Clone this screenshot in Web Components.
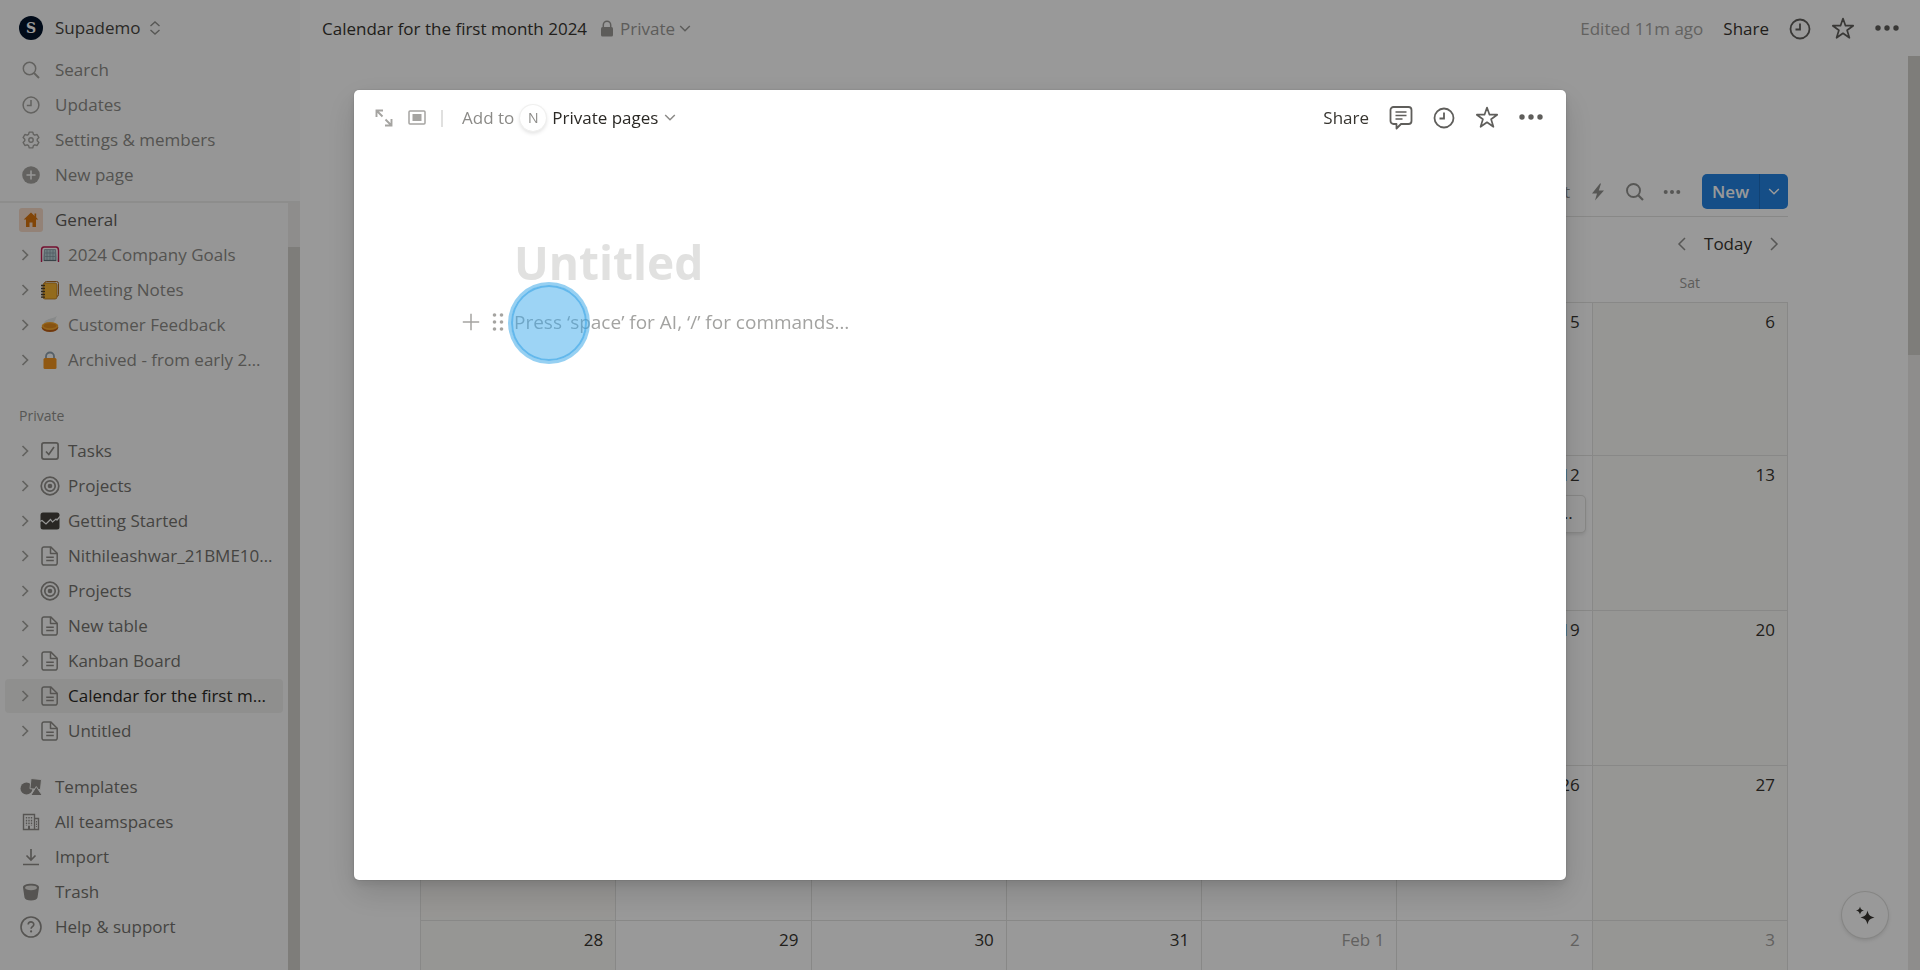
<!DOCTYPE html>
<html lang="en">
<head>
<meta charset="utf-8">
<title>Calendar for the first month 2024</title>
<style>
  html, body {
    height: 100%;
    margin: 0;
  }
  body {
    overflow: hidden;
    font-family: "Open Sans", "Noto Sans", sans-serif;
    font-size: 17px;
    line-height: 24px;
    color: #373530;
    background: #ffffff;
  }
</style>
</head>
<body>
<app-shell>
  <side-bar slot="sidebar">
    <side-item slot="top" kind="workspace" icon="logo">Supademo</side-item>
    <side-item slot="top" kind="muted" icon="search">Search</side-item>
    <side-item slot="top" kind="muted" icon="clock">Updates</side-item>
    <side-item slot="top" kind="muted" icon="gear">Settings &amp; members</side-item>
    <side-item slot="top" kind="muted" icon="plusCircle">New page</side-item>

    <side-item kind="team" icon="house">General</side-item>
    <side-item kind="page muted" icon="goal">2024 Company Goals</side-item>
    <side-item kind="page muted" icon="notebook">Meeting Notes</side-item>
    <side-item kind="page muted" icon="pie">Customer Feedback</side-item>
    <side-item kind="page muted" icon="padlock">Archived - from early 2…</side-item>

    <side-label>Private</side-label>
    <side-item kind="page" icon="task">Tasks</side-item>
    <side-item kind="page" icon="target">Projects</side-item>
    <side-item kind="page" icon="chart">Getting Started</side-item>
    <side-item kind="page" icon="doc">Nithileashwar_21BME10…</side-item>
    <side-item kind="page" icon="target">Projects</side-item>
    <side-item kind="page" icon="doc">New table</side-item>
    <side-item kind="page" icon="doc">Kanban Board</side-item>
    <side-item kind="page active" icon="doc">Calendar for the first m…</side-item>
    <side-item kind="page" icon="doc">Untitled</side-item>

    <side-item kind="first" icon="shapes">Templates</side-item>
    <side-item icon="building">All teamspaces</side-item>
    <side-item icon="download">Import</side-item>
    <side-item icon="trash">Trash</side-item>
    <side-item icon="help">Help &amp; support</side-item>
  </side-bar>

  <top-bar slot="topbar">Calendar for the first month 2024</top-bar>
  <calendar-view></calendar-view>
</app-shell>
<page-peek></page-peek>

<script>
const icons = {
  logo: [24, '<circle cx="12" cy="12" r="12" fill="#02132b"/><text x="12" y="17" text-anchor="middle" font-family="DejaVu Serif, serif" font-weight="700" font-size="14" fill="#fff">S</text>'],
  search: [18, '<g fill="none" stroke="currentColor"><circle cx="7.5" cy="7.5" r="6.2" stroke-width="1.5"/><path d="M12 12l5 5" stroke-width="2"/></g>'],
  clock: [18, '<g fill="none" stroke="currentColor" stroke-width="1.5"><circle cx="9" cy="9" r="7.9"/><path d="M9 4v5.4H4.8"/></g>'],
  gear: [18, '<g fill="none" stroke="currentColor" stroke-width="1.4" stroke-linejoin="round"><path d="M7.2 1.1h3.6l.6 2.3 1.4.8 2.3-.7 1.8 3.1-1.7 1.6v1.6l1.7 1.6-1.8 3.1-2.3-.7-1.4.8-.6 2.3H7.200l-.6-2.3-1.400-.8-2.300.7-1.800-3.100L2.800 9.800V8.200L1.100 6.600l1.800-3.100 2.300.7 1.400-.8z"/><circle cx="9" cy="9" r="2.200"/></g>'],
  plusCircle: [18, '<circle cx="9" cy="9" r="8.8" fill="currentColor"/><path d="M9 5v8M5 9h8" stroke="#fbfbfa" stroke-width="1.5" stroke-linecap="round"/>'],
  house: [24, '<rect width="24" height="24" rx="3" fill="#f5d9c6"/><path d="M12 4.5l7.300 7H17V19h-3.500v-4.500h-3V19H7v-7.500H4.700z" fill="#d9730d"/><path d="M15.500 5.500H17.200v4.500l-1.700-1.500z" fill="#d9730d"/>'],
  goal: [20, '<path d="M4 4h12l1.500 12h-15z" fill="#b8d0d6"/><path d="M5 4.500h10M4.500 4.500V15M15.500 4.500V15M7 5v10M10 5v10M13 5v10M5 8h10M5 11.500h10" stroke="#8497a0" stroke-width=".7"/><path d="M1.500 17V5.500c0-2 1-3.500 2.500-3.500h12c1.500 0 2.500 1.500 2.500 3.500V17" fill="none" stroke="#c01b50" stroke-width="1.400"/><path d="M4 15.500h12" stroke="#5e7079" stroke-width="1.200"/>'],
  notebook: [20, '<rect x="4.500" y="1.500" width="14" height="15" rx="2" fill="#f2f2f2" stroke="#ab641b"/><rect x="3" y="3" width="14" height="16" rx="2" fill="#f5b331" stroke="#b8761b" stroke-width=".8"/><path d="M1 5.500h4M1 8.500h4M1 11.500h4M1 14.500h4M1 17.200h4" stroke="#4d4130" stroke-width="1.300"/>'],
  pie: [20, '<path d="M4 8c1-3 3-3 5-4s5-1 8-3c-2 3-1 5-5 7z" fill="#d6dadc" opacity=".7"/><ellipse cx="10" cy="12.500" rx="8.300" ry="4.500" fill="#bd6016"/><ellipse cx="10" cy="11" rx="8.300" ry="4" fill="#f7a72c"/><ellipse cx="10" cy="10.700" rx="6.500" ry="2.500" fill="#e28a1d"/>'],
  padlock: [20, '<path d="M6 9V6.500a4 4 0 018 0V9" fill="none" stroke="#8fa0ae" stroke-width="1.800"/><rect x="3.500" y="8" width="13" height="11" rx="1.500" fill="#f0931f"/>'],
  task: [20, '<g fill="none" stroke="currentColor" stroke-width="1.700"><rect x="1.900" y="1.900" width="16.200" height="16.200" rx="2"/><path d="M6 10.500l2.800 3L14 6"/></g>'],
  target: [20, '<g fill="none" stroke="currentColor" stroke-width="1.700"><circle cx="10" cy="10" r="8.800"/><circle cx="10" cy="10" r="5.200"/></g><circle cx="10" cy="10" r="2.300" fill="currentColor"/>'],
  chart: [20, '<rect x=".5" y="1.500" width="19" height="17" rx="2.500" fill="#45423d"/><path d="M0 10.500l2-1 4 3.500 4.500-4.500 2 2.500L16 8l1 1 3-3.500" fill="none" stroke="#fbfbfa" stroke-width="1.200"/>'],
  doc: [20, '<g fill="none" stroke="currentColor" stroke-width="1.500" stroke-linejoin="round"><path d="M4 .9h6.700l6.500 6.300V17a2 2 0 01-2 2.100H4A2 2 0 012 17V3A2 2 0 014 .9z"/><path d="M10.500 1v6.400H17M6.200 11.300h7.600M6.200 14.500h7.600"/></g>'],
  shapes: [22, '<g fill="currentColor"><circle cx="6.500" cy="12.500" r="6"/><path d="M11 2.500l10.500 1-1 10.200-10.500-1z" stroke="#fbfbfa" stroke-width="1"/><path d="M16.300 10.500l6 9H10.700z" stroke="#fbfbfa" stroke-width="1"/></g>'],
  building: [18, '<g fill="none" stroke="currentColor" stroke-width="1.400"><path d="M1.500 16.500v-15h11v15zM12.500 5.500h4v11h-4"/></g><path d="M4.500 4v9M7 4v9M9.500 4v9" stroke="currentColor" stroke-width="1.400" stroke-dasharray="1.600 1.200"/><path d="M14.500 8v6" stroke="currentColor" stroke-dasharray="1.500 1"/><path d="M7 13v3" stroke="currentColor" stroke-width="2"/>'],
  download: [18, '<path d="M9 1v11M4.500 7.500L9 12l4.500-4.500M1 16.500h16" fill="none" stroke="currentColor" stroke-width="1.700"/>'],
  trash: [18, '<path d="M1 4.500C1 2 4.500.8 9 .8S17 2 17 4.500l-1.500 10c-.3 2-3 3-6.500 3s-6.200-1-6.500-3z" fill="currentColor"/><ellipse cx="9" cy="4.800" rx="6" ry="2.400" fill="#e4e3e0"/>'],
  help: [22, '<g fill="none" stroke="currentColor" stroke-width="1.600"><circle cx="11" cy="11" r="10"/><path d="M8.200 8.600c0-3.700 5.600-3.500 5.600-.2 0 2.200-2.700 2.100-2.700 4.300"/></g><circle cx="11.100" cy="15.400" r="1.100" fill="currentColor"/>'],
  updown: [16, '<path d="M3.500 6L8 2l4.500 4M3.500 10L8 14l4.500-4" fill="none" stroke="currentColor" stroke-width="1.400"/>'],
  right: [14, '<path d="M4.500 2l5 5-5 5" fill="none" stroke="currentColor" stroke-width="1.700"/>'],
  prev: [16, '<path d="M11 2L5 8l6 6" fill="none" stroke="currentColor" stroke-width="1.500"/>'],
  next: [16, '<path d="M5 2l6 6-6 6" fill="none" stroke="currentColor" stroke-width="1.500"/>'],
  down: [12, '<path d="M1.200 3L6 7.800 10.800 3" fill="none" stroke="currentColor" stroke-width="1.500"/>'],
  lock: [18, '<path d="M5.300 8V5a3.700 3.700 0 017.400 0v3" fill="none" stroke="currentColor" stroke-width="1.500"/><rect x="3" y="7" width="12" height="9.500" rx="1.500" fill="currentColor"/>'],
  time: [22, '<g fill="none" stroke="currentColor" stroke-width="1.800"><circle cx="11" cy="11" r="9.500"/><path d="M11 5.500v6H6.500"/></g>'],
  star: [24, '<path d="M12 1.500l2.500 7.200h7.700l-6.100 4.600 2.300 7.500-6.400-4.500-6.400 4.500 2.300-7.500L1.800 8.700h7.700z" fill="none" stroke="currentColor" stroke-width="1.700" stroke-linejoin="round"/>'],
  dots: [24, '<g fill="currentColor"><circle cx="3" cy="11" r="2.700"/><circle cx="12" cy="11" r="2.700"/><circle cx="21" cy="11" r="2.700"/></g>'],
  comment: [24, '<g fill="none" stroke="currentColor" stroke-linejoin="round"><path d="M4.500 1h15a3 3 0 013 3v11a3 3 0 01-3 3H12l-4.500 4.500V18h-3a3 3 0 01-3-3V4a3 3 0 013-3z" stroke-width="1.800"/><path d="M6.500 6h11M6.500 9.500h11M6.500 13h7" stroke-width="1.500"/></g>'],
  bolt: [18, '<path d="M11 .5L3 10.500h5L6 17.500l9-10H9.800L12 .5z" fill="currentColor"/>'],
  find: [18, '<g fill="none" stroke="currentColor"><circle cx="7.500" cy="7.500" r="6.500" stroke-width="1.900"/><path d="M12 12l5 5" stroke-width="2.200"/></g>'],
  more: [18, '<g fill="currentColor"><circle cx="2.700" cy="9" r="2"/><circle cx="9" cy="9" r="2"/><circle cx="15.300" cy="9" r="2"/></g>'],
  expand: [20, '<g fill="none" stroke="currentColor" stroke-width="1.900"><path d="M2.500 9V2.500H9M2.500 2.500l6 6M11 17.500h6.500V11M17.500 17.500l-6-6"/></g>'],
  peek: [18, '<rect x="1" y="2" width="16" height="13" rx="1" fill="none" stroke="currentColor" stroke-width="1.500"/><rect x="4.500" y="5" width="9" height="7" fill="currentColor"/>'],
  plus: [18, '<path d="M9 .8v16.400M.8 9h16.400" stroke="currentColor" stroke-width="1.500"/>'],
  grip: [18, '<g fill="currentColor"><circle cx="5.500" cy="2" r="1.800"/><circle cx="12.500" cy="2" r="1.800"/><circle cx="5.500" cy="9" r="1.800"/><circle cx="12.500" cy="9" r="1.800"/><circle cx="5.500" cy="16" r="1.800"/><circle cx="12.500" cy="16" r="1.800"/></g>'],
  sparkle: [22, '<g fill="currentColor"><path d="M13.500 6.500c1 4.500 2.500 6 7 7-4.500 1-6 2.500-7 7-1-4.500-2.500-6-7-7 4.500-1 6-2.500 7-7z"/><path d="M6 2.500c.6 2.600 1.500 3.400 4 4-2.500.6-3.400 1.500-4 4-.6-2.500-1.500-3.400-4-4 2.500-.6 3.400-1.400 4-4z"/></g>'],
};

const base = `
  :host,
  * {
    box-sizing: border-box;
  }
  button {
    display: flex;
    align-items: center;
    padding: 0;
    border: none;
    background: none;
    font: inherit;
    color: inherit;
    cursor: pointer;
  }
`;

class BaseElement extends HTMLElement {
  constructor() {
    super();
    this.attachShadow({ mode: 'open' });
  }

  connectedCallback() {
    this.shadowRoot.innerHTML = `<style>${base}</style>${this.render()}`;
  }
}

class UiIcon extends BaseElement {
  render() {
    const [size, body] = icons[this.getAttribute('name')];

    return `
      <style>
        :host {
          display: inline-flex;
          flex: none;
        }
        svg {
          display: block;
        }
      </style>
      <svg width="${size}" height="${size}" viewBox="0 0 ${size} ${size}" aria-hidden="true">${body}</svg>
    `;
  }
}

class SideItem extends BaseElement {
  render() {
    const kind = (this.getAttribute('kind') || '').split(' ');
    const isPage = kind.includes('page');

    return `
      <style>
        :host {
          display: block;
          padding: 0 5px;
          font-weight: 500;
        }
        a {
          display: flex;
          align-items: center;
          height: 34px;
          padding-left: 13px;
          border-radius: 4px;
          color: #73726e;
          text-decoration: none;
          white-space: nowrap;
        }
        .icon {
          display: flex;
          justify-content: center;
          width: 26px;
          margin-right: 11px;
          color: #8f8d89;
        }
        .arrow {
          color: #a5a4a0;
        }
        .page .icon {
          width: 24px;
          margin: 0 6px;
        }
        .muted {
          color: #8c8b87;
        }
        .muted .icon {
          color: #a5a4a0;
        }
        .workspace {
          height: 48px;
          color: #474541;
        }
        .workspace .updown {
          margin-left: 6px;
          color: #91918e;
        }
        .team {
          color: #5f5e5b;
        }
        .active {
          background: #efefed;
          color: #2b2925;
        }
        .first {
          margin-top: 21px;
        }
      </style>
      <a href="#" class="${kind.join(' ')}">
        ${isPage ? '<ui-icon class="arrow" name="right"></ui-icon>' : ''}
        <span class="icon"><ui-icon name="${this.getAttribute('icon')}"></ui-icon></span>
        <slot></slot>
        ${kind.includes('workspace') ? '<ui-icon class="updown" name="updown"></ui-icon>' : ''}
      </a>
    `;
  }
}

class SideLabel extends BaseElement {
  render() {
    return `
      <style>
        :host {
          display: block;
          margin-top: 21px;
          padding: 0 19px;
          font-size: 14px;
          font-weight: 500;
          line-height: 34px;
          color: #91918e;
        }
      </style>
      <slot></slot>
    `;
  }
}

class SideBar extends BaseElement {
  render() {
    return `
      <style>
        :host {
          display: flex;
          flex-direction: column;
          width: 300px;
          height: 100%;
          background: #fbfbfa;
        }
        nav {
          display: flex;
          flex-direction: column;
          gap: 1px;
        }
        .top {
          padding: 4px 0 9px;
          border-bottom: 2px solid #ebebea;
        }
        .scroll {
          flex: 1;
          min-height: 0;
          display: flex;
          overflow: hidden;
        }
        .list {
          flex: 1;
          min-width: 0;
        }
        .track {
          width: 12px;
          padding-top: 44px;
          background: #edece9;
        }
        .thumb {
          height: 100%;
          background: #d3d1cb;
        }
      </style>
      <nav class="top"><slot name="top"></slot></nav>
      <div class="scroll">
        <nav class="list"><slot></slot></nav>
        <div class="track"><div class="thumb"></div></div>
      </div>
    `;
  }
}

class TopBar extends BaseElement {
  render() {
    return `
      <style>
        :host {
          display: flex;
          align-items: center;
          justify-content: space-between;
          height: 56px;
          padding: 2px 21px 0 22px;
          white-space: nowrap;
        }
        .group {
          display: flex;
          align-items: center;
        }
        .private {
          gap: 4px;
          margin-left: 11px;
          color: #9b9a97;
        }
        .actions {
          gap: 20px;
          color: #5f5e5b;
        }
        .edited {
          color: #a5a4a1;
        }
        .share {
          color: #373530;
        }
      </style>
      <div class="group">
        <slot></slot>
        <button class="private">
          <ui-icon name="lock"></ui-icon>
          Private
          <ui-icon name="down"></ui-icon>
        </button>
      </div>
      <div class="group actions">
        <span class="edited">Edited 11m ago</span>
        <button class="share">Share</button>
        <button aria-label="Updates"><ui-icon name="time"></ui-icon></button>
        <button aria-label="Favorite"><ui-icon name="star"></ui-icon></button>
        <button aria-label="More"><ui-icon name="dots"></ui-icon></button>
      </div>
    `;
  }
}

class CalendarView extends BaseElement {
  weeks = [
    ['', '', '', '', '', '5', '6'],
    ['', '', '', '', '', '12', '13'],
    ['', '', '', '', '', '19', '20'],
    ['', '', '', '', '', '26', '27'],
    ['28', '29', '30', '31', 'Feb 1', '2', '3'],
  ];

  renderDay(day, week, index) {
    const classes = [];

    if (index === 0 || index === 6) {
      classes.push('weekend');
    }

    if (week === 4 && index > 3) {
      classes.push('outside');
    }

    const card = day === '12' ? '<a class="card" href="#">…</a>' : '';

    return `<td class="${classes.join(' ')}">${day}${card}</td>`;
  }

  render() {
    const rows = this.weeks.map((days, week) => {
      return `<tr>${days.map((day, index) => this.renderDay(day, week, index)).join('')}</tr>`;
    });

    return `
      <style>
        :host {
          display: block;
          padding: 118px 120px 0;
        }
        .toolbar,
        .month {
          display: flex;
          align-items: center;
          justify-content: flex-end;
        }
        .toolbar {
          padding-bottom: 7px;
          border-bottom: 1px solid #e3e3e1;
          color: #91918e;
        }
        .toolbar > button {
          margin-right: 19px;
        }
        .new {
          display: flex;
          height: 35px;
          margin-left: 2px;
          border-radius: 5px;
          overflow: hidden;
          background: #2383e2;
          color: #ffffff;
          font-weight: 600;
        }
        .new button:first-child {
          padding: 0 10px;
          border-right: 1px solid #1d6fc0;
        }
        .new button:last-child {
          padding: 0 8px;
        }
        .month {
          height: 54px;
          padding-right: 6px;
          gap: 14px;
        }
        .month ui-icon {
          color: #91918e;
        }
        table {
          width: 100%;
          table-layout: fixed;
          border-collapse: collapse;
        }
        th {
          height: 31px;
          padding: 0 0 6px;
          font-size: 14px;
          font-weight: 400;
          color: #9b9a97;
        }
        td {
          height: 155px;
          padding: 7px 12px 0;
          border: 1px solid #e3e3e1;
          text-align: right;
          vertical-align: top;
        }
        tbody tr:first-child td {
          height: 153px;
        }
        .weekend {
          background: #fbfaf7;
        }
        .outside {
          color: #a3a29f;
        }
        .card {
          display: block;
          height: 36px;
          margin: 9px -5px 0;
          padding: 5px 12px;
          border-radius: 4px;
          box-shadow: 0 0 0 1px #e0e0de, 0 2px 4px rgba(15, 15, 15, 0.15);
          background: #ffffff;
          color: inherit;
          text-decoration: none;
        }
      </style>
      <div class="toolbar">
        <button>Sort</button>
        <button aria-label="Automations"><ui-icon name="bolt"></ui-icon></button>
        <button aria-label="Search"><ui-icon name="find"></ui-icon></button>
        <button aria-label="More"><ui-icon name="more"></ui-icon></button>
        <div class="new">
          <button>New</button>
          <button aria-label="Templates"><ui-icon name="down"></ui-icon></button>
        </div>
      </div>
      <div class="month">
        <button aria-label="Previous month"><ui-icon name="prev"></ui-icon></button>
        <button>Today</button>
        <button aria-label="Next month"><ui-icon name="next"></ui-icon></button>
      </div>
      <table>
        <thead>
          <tr><th></th><th></th><th></th><th></th><th></th><th></th><th>Sat</th></tr>
        </thead>
        <tbody>${rows.join('')}</tbody>
      </table>
    `;
  }
}

class AppShell extends BaseElement {
  render() {
    return `
      <style>
        :host {
          display: grid;
          grid-template-columns: auto minmax(0, 1fr);
          height: 100vh;
        }
        main {
          display: flex;
          flex-direction: column;
          min-height: 0;
          height: 100vh;
        }
        .body {
          flex: 1;
          min-height: 0;
          display: flex;
        }
        .content {
          flex: 1;
          min-width: 0;
          overflow: hidden;
        }
        .track {
          width: 12px;
          background: #edece9;
        }
        .thumb {
          height: 299px;
          background: #d3d1cb;
        }
        .ai {
          position: fixed;
          right: 32px;
          bottom: 32px;
          justify-content: center;
          width: 46px;
          height: 46px;
          border-radius: 50%;
          background: #ffffff;
          box-shadow: 0 0 0 1px #dededc, 0 2px 4px rgba(15, 15, 15, 0.15);
        }
      </style>
      <slot name="sidebar"></slot>
      <main>
        <slot name="topbar"></slot>
        <div class="body">
          <div class="content"><slot></slot></div>
          <div class="track"><div class="thumb"></div></div>
        </div>
      </main>
      <button class="ai" aria-label="Ask AI"><ui-icon name="sparkle"></ui-icon></button>
    `;
  }
}

class PagePeek extends BaseElement {
  render() {
    return `
      <style>
        :host {
          position: fixed;
          inset: 0;
          display: flex;
          justify-content: center;
          padding: 90px 72px;
          background: rgba(0, 0, 0, 0.4);
        }
        .peek {
          width: 100%;
          max-width: 1212px;
          border-radius: 5px;
          background: #ffffff;
          box-shadow: 0 0 0 1px rgba(15, 15, 15, 0.05), 0 4px 8px rgba(15, 15, 15, 0.1), 0 12px 32px rgba(15, 15, 15, 0.15);
        }
        header,
        .group {
          display: flex;
          align-items: center;
          white-space: nowrap;
        }
        header {
          justify-content: space-between;
          height: 56px;
          padding: 0 23px 0 20px;
        }
        .tools {
          color: #a5a4a1;
          gap: 14px;
        }
        .divider {
          width: 2px;
          height: 17px;
          margin-left: 1px;
          background: #e0e0df;
        }
        .target {
          gap: 6px;
          margin-left: 5px;
          color: #8b8a87;
        }
        .avatar {
          display: flex;
          align-items: center;
          justify-content: center;
          width: 26px;
          height: 26px;
          border-radius: 50%;
          box-shadow: 0 0 0 1px #f0f0ef, 0 2px 4px rgba(15, 15, 15, 0.15);
          font-size: 14px;
        }
        .target b {
          font-weight: 500;
          color: #2b2925;
        }
        .actions {
          gap: 20px;
          color: #5f5e5b;
        }
        .share {
          color: #373530;
        }
        .page {
          padding: 84px 160px 0;
        }
        input {
          display: block;
          width: 100%;
          padding: 0;
          border: none;
          outline: none;
          background: none;
          font: inherit;
          color: inherit;
        }
        input::placeholder {
          color: #a3a3a1;
          opacity: 1;
        }
        .title {
          height: 64px;
          font-size: 46px;
          font-weight: 700;
        }
        .title::placeholder {
          color: #e1e1e0;
        }
        .block {
          position: relative;
          display: flex;
          align-items: center;
          height: 36px;
          margin-top: 10px;
          font-size: 19px;
        }
        .handles {
          position: absolute;
          right: 100%;
          display: flex;
          gap: 9px;
          margin-right: 7px;
          color: #a5a4a1;
        }
        .hotspot {
          position: absolute;
          left: -6px;
          top: -22px;
          width: 82px;
          height: 82px;
          border: 3px solid rgba(64, 170, 232, 0.55);
          border-radius: 50%;
          background: rgba(59, 170, 235, 0.5);
          background-clip: padding-box;
          pointer-events: none;
        }
        .hotspot::after {
          content: '';
          display: block;
          box-sizing: border-box;
          height: 100%;
          border: 2px solid rgba(40, 155, 228, 0.5);
          border-radius: 50%;
        }
      </style>
      <section class="peek" role="dialog" aria-label="Untitled">
        <header>
          <div class="group tools">
            <button aria-label="Open as full page"><ui-icon name="expand"></ui-icon></button>
            <button aria-label="Switch peek mode"><ui-icon name="peek"></ui-icon></button>
            <span class="divider"></span>
            <button class="target">
              Add to
              <span class="avatar">N</span>
              <b>Private pages</b>
              <ui-icon name="down"></ui-icon>
            </button>
          </div>
          <div class="group actions">
            <button class="share">Share</button>
            <button aria-label="Comments"><ui-icon name="comment"></ui-icon></button>
            <button aria-label="Updates"><ui-icon name="time"></ui-icon></button>
            <button aria-label="Favorite"><ui-icon name="star"></ui-icon></button>
            <button aria-label="More"><ui-icon name="dots"></ui-icon></button>
          </div>
        </header>
        <div class="page">
          <input class="title" placeholder="Untitled" aria-label="Page title">
          <div class="block">
            <div class="handles">
              <button aria-label="Add block"><ui-icon name="plus"></ui-icon></button>
              <button aria-label="Drag block"><ui-icon name="grip"></ui-icon></button>
            </div>
            <input placeholder="Press ‘space’ for AI, ‘/’ for commands…" aria-label="Page content">
            <span class="hotspot"></span>
          </div>
        </div>
      </section>
    `;
  }
}

customElements.define('ui-icon', UiIcon);
customElements.define('side-item', SideItem);
customElements.define('side-label', SideLabel);
customElements.define('side-bar', SideBar);
customElements.define('top-bar', TopBar);
customElements.define('calendar-view', CalendarView);
customElements.define('app-shell', AppShell);
customElements.define('page-peek', PagePeek);
</script>
</body>
</html>
